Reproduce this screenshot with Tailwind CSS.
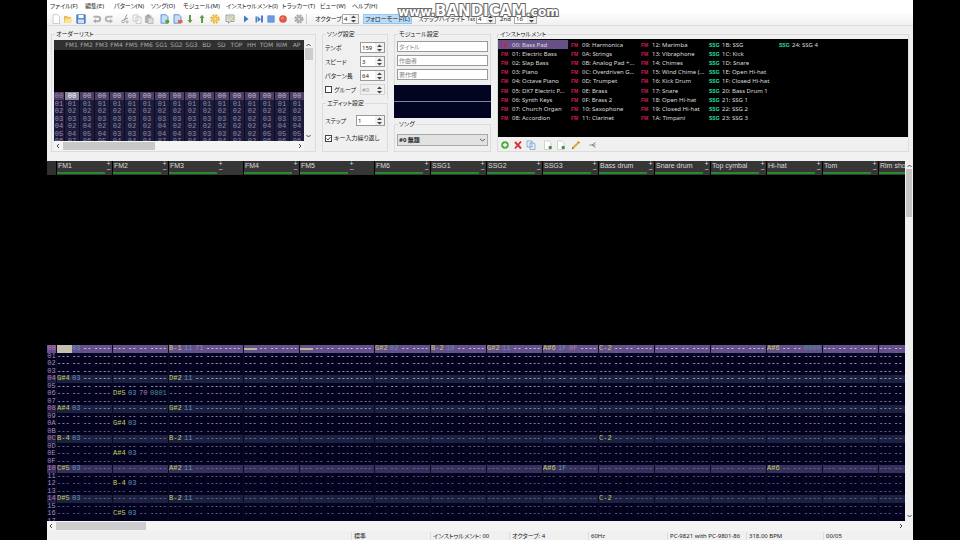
<!DOCTYPE html>
<html lang="ja">
<head>
<meta charset="utf-8">
<title>BambooTracker</title>
<script src="https://cdn.jsdelivr.net/npm/@tailwindcss/browser@4"></script>
</head>
<body class="bg-black font-['Noto_Sans','Noto_Sans_CJK_JP',sans-serif] text-[7px] leading-[8px] text-[#222] [font-feature-settings:'palt']">
<div class="relative mx-[47px] flex h-screen flex-col overflow-hidden bg-[#f0f0f0]">

  <nav class="grid h-3 shrink-0 grid-cols-[35px_29px_37px_32px_43px_56px_38px_32px_auto] items-center bg-white pl-[3px] text-[6px] whitespace-nowrap">
    <a href="#">ファイル(F)</a><a href="#">編集(E)</a><a href="#">パターン(N)</a><a href="#">ソング(O)</a><a href="#">モジュール(M)</a><a href="#">インストゥルメント(I)</a><a href="#">トラッカー(T)</a><a href="#">ビュー(W)</a><a href="#">ヘルプ(H)</a>
  </nav>

  <div class="flex h-[14px] shrink-0 items-center border-b border-[#dcdcdc] bg-gradient-to-b from-white to-[#f0f0f0] pl-1 whitespace-nowrap">
    <div class="flex w-[256px] items-center justify-between border-r border-[#d0d0d0] pr-[2px]">
      <button aria-label="新規"><svg width="10" height="10" viewBox="0 0 10 10"><path d="M2 .7h4.5l2 2v6.8H2z" fill="#fff" stroke="#bbb" stroke-width=".7"/></svg></button>
      <button aria-label="開く"><svg width="10" height="10" viewBox="0 0 10 10"><path d="M1 2h3l1 1h3v6H1z" fill="#e8bc60"/><path d="M2.500 4.500h7L8 9H1z" fill="#fbe48c"/></svg></button>
      <button aria-label="保存"><svg width="10" height="10" viewBox="0 0 10 10"><path d="M.8.8h8.400v8.400H.8z" fill="#5a8fdc" stroke="#2c5fa8" stroke-width=".7"/><path d="M2.500 1h5v3h-5z" fill="#fff"/><path d="M2 5.500h6V9H2z" fill="#cfe2fa"/></svg></button>
      <i class="w-px"></i>
      <button aria-label="元に戻す"><svg width="10" height="10" viewBox="0 0 10 10"><path d="M1.500 2.800H6a2.200 2.200 0 0 1 0 4.400H3" fill="none" stroke="#b0b0b0" stroke-width="2"/><path d="M4 4.800v4.500L1 7.200z" fill="#a8a8a8"/></svg></button>
      <button aria-label="やり直し"><svg width="10" height="10" viewBox="0 0 10 10"><path d="M8.500 2.800H4a2.200 2.200 0 0 0 0 4.400h3" fill="none" stroke="#b8b8b8" stroke-width="2"/><path d="M6 4.800v4.500l3-2.100z" fill="#b0b0b0"/></svg></button>
      <i class="w-px"></i>
      <button aria-label="切り取り"><svg width="10" height="10" viewBox="0 0 10 10"><path d="M7 .5 4 6.500M8 4 3.500 6" stroke="#999" fill="none"/><circle cx="3" cy="7.500" r="1.300" fill="none" stroke="#aaa"/><circle cx="7" cy="7.800" r="1.100" fill="none" stroke="#aaa"/></svg></button>
      <button aria-label="コピー"><svg width="10" height="10" viewBox="0 0 10 10"><path d="M1 1h5v6H1zM4 3h5v6.500H4z" fill="#f6f6f6" stroke="#bbb" stroke-width=".7"/></svg></button>
      <button aria-label="貼り付け"><svg width="10" height="10" viewBox="0 0 10 10"><path d="M1 1.500h6.500V9H1z" fill="#b4b4b4"/><path d="M3 .5h2.500v2H3z" fill="#999"/><path d="M4 4h5v5.500H4z" fill="#ddd" stroke="#aaa" stroke-width=".7"/></svg></button>
      <i class="w-px"></i>
      <button aria-label="上に追加"><svg width="10" height="10" viewBox="0 0 10 10"><path d="M1 .7h5l2 2v6.500H1z" fill="#c4dcf8" stroke="#4c82c8" stroke-width=".8"/><circle cx="7.300" cy="7.500" r="2" fill="#4ea63f"/></svg></button>
      <button aria-label="削除"><svg width="10" height="10" viewBox="0 0 10 10"><path d="M1 .7h5l2 2v6.500H1z" fill="#c4dcf8" stroke="#4c82c8" stroke-width=".8"/><path d="M5 6h4.500v3H5z" fill="#e4673e"/></svg></button>
      <button aria-label="下へ"><svg width="10" height="10" viewBox="0 0 10 10"><path d="M4 1h2v5h1.500L5 9.300 2.500 6H4z" fill="#5d9c4c"/></svg></button>
      <button aria-label="上へ"><svg width="10" height="10" viewBox="0 0 10 10"><path d="M4 9h2V4h1.500L5 .7 2.500 4H4z" fill="#5d9c4c"/></svg></button>
      <button aria-label="モジュール設定"><svg width="10" height="10" viewBox="0 0 10 10"><circle cx="5" cy="5" r="3.700" fill="none" stroke="#eab23e" stroke-width="2" stroke-dasharray="1.900 1"/><circle cx="5" cy="5" r="3" fill="#f5c14e"/><circle cx="5" cy="5" r=".8" fill="#fff"/></svg></button>
      <i class="w-px"></i>
      <button aria-label="コメント"><svg width="10" height="10" viewBox="0 0 10 10"><path d="M1 1h8v6.500H5L3.500 9.300V7.500H1z" fill="#f0ecc8" stroke="#7a92a8" stroke-width=".8"/><path d="M2.500 3h5M2.500 5h3" stroke="#8ba0b4" stroke-width=".7"/><path d="m5 7.500 4-4" stroke="#d4aa4a"/></svg></button>
      <i class="w-px"></i>
      <button aria-label="再生"><svg width="10" height="10" viewBox="0 0 10 10"><path d="M3 1.500 7.500 5 3 8.500z" fill="#3b7ad0"/></svg></button>
      <button aria-label="パターンの先頭から再生"><svg width="10" height="10" viewBox="0 0 10 10"><path d="M1.500 2.500H3v6H1.500zM3.500 2l3.500 3.500L3.500 8zM7 1.500h2v7H7z" fill="#4a80cc"/></svg></button>
      <button aria-label="停止"><svg width="10" height="10" viewBox="0 0 10 10"><path d="M1.700 1.700h6.600v6.600H1.700z" fill="#6a9be0" stroke="#5a8cd4" stroke-width=".6"/></svg></button>
      <button aria-label="ジャムモード"><svg width="10" height="10" viewBox="0 0 10 10"><circle cx="5" cy="5" r="3.800" fill="#e2553f"/><circle cx="4.500" cy="4" r="1.600" fill="#f08070"/></svg></button>
      <i class="w-px"></i>
      <button aria-label="設定"><svg width="10" height="10" viewBox="0 0 10 10"><circle cx="5" cy="5" r="3.800" fill="none" stroke="#a4a4a4" stroke-width="1.600" stroke-dasharray="2 1"/><circle cx="5" cy="5" r="3.200" fill="#b0b0b0"/><circle cx="5" cy="5" r="1" fill="#ddd"/></svg></button>
    </div>
    <label for="oct" class="ml-2 w-[27px] text-[6px]">オクターブ</label>
    <div class="spin flex h-[10px] w-[17px] border border-[#aaa] bg-white text-[6px]"><input id="oct" value="4" class="w-0 grow pl-px"></div>
    <button class="ml-1 h-[10px] w-[49px] border border-[#90c8f6] bg-[#b9dcf8] text-[6px] leading-[8px]">フォローモード(L)</button>
    <label for="h1" class="ml-[6px] w-[58px] text-[6px]">ステップハイライト 1st</label>
    <div class="spin flex h-[10px] w-5 border border-[#aaa] bg-white text-[6px]"><input id="h1" value="4" class="w-0 grow pl-px"></div>
    <label for="h2" class="ml-1 w-[14px] text-[6px]">2nd</label>
    <div class="spin flex h-[10px] w-[23px] border border-[#aaa] bg-white text-[6px]"><input id="h2" value="16" class="w-0 grow pl-px"></div>
  </div>

  <p class="absolute top-[2px] left-[351px] font-['DejaVu_Sans',sans-serif] text-[12px] leading-[18px] font-bold whitespace-nowrap text-white [-webkit-text-stroke:2px_#666] [paint-order:stroke]">www.<span class="text-[15px]">BANDICAM</span>.com</p>

  <main class="flex h-[135px] shrink-0 items-start gap-[6px] px-1 pt-1">
    <fieldset class="h-[122px] w-[265px] min-w-0 border border-[#dcdcdc] px-[2px]">
      <legend class="ml-px px-px text-[6px]">オーダーリスト</legend>
      <div class="mt-[2px] grid grid-cols-[250px_9px] grid-rows-[101px_10px]">
        <div class="overflow-hidden bg-black font-['DejaVu_Sans',sans-serif] text-[#8d8ba0]">
          <table class="block w-full">
            <thead class="block"><tr id="ohead" class="flex h-[10px] items-center bg-[#303030] text-[6px] text-[#aaa]"></tr></thead>
            <tbody id="orders" class="mt-[42px] grid h-[60px] grid-rows-8 font-['Liberation_Mono',monospace] text-[7px]"></tbody>
          </table>
        </div>
        <div class="flex flex-col items-center justify-between bg-[#f0f0f0] py-[2px]">
          <svg width="7" height="6" viewBox="0 0 7 6"><path d="M1.500 4 3.500 2l2 2" fill="none" stroke="#444"/></svg>
          <i class="mb-auto h-[12px] w-[8px] bg-[#cdcdcd]"></i>
          <svg width="7" height="6" viewBox="0 0 7 6"><path d="m1.500 2 2 2 2-2" fill="none" stroke="#444"/></svg>
        </div>
        <div class="flex items-center bg-[#f4f4f4]">
          <svg width="9" height="8" viewBox="0 0 9 8"><path d="M5 2 3 4l2 2" fill="none" stroke="#444"/></svg>
          <i class="mr-auto h-2 w-[92px] bg-[#c8c8c8]"></i>
          <svg width="9" height="8" viewBox="0 0 9 8"><path d="m4 2 2 2-2 2" fill="none" stroke="#444"/></svg>
        </div>
      </div>
    </fieldset>

    <div class="w-[66px]">
      <fieldset class="h-[69px] border border-b-0 border-[#dcdcdc] px-[2px]">
        <legend class="ml-px px-px text-[6px]">ソング設定</legend>
        <div class="mt-1 grid gap-y-[3px] text-[6px]">
          <div class="flex h-[11px] items-center"><label for="tempo" class="grow">テンポ</label><div class="spin flex h-[11px] w-[25px] border border-[#999] bg-white"><input id="tempo" value="159" class="w-0 grow pl-px"></div></div>
          <div class="flex h-[11px] items-center"><label for="speed" class="grow">スピード</label><div class="spin flex h-[11px] w-[25px] border border-[#999] bg-white"><input id="speed" value="3" class="w-0 grow pl-px"></div></div>
          <div class="flex h-[11px] items-center"><label for="plen" class="grow">パターン長</label><div class="spin flex h-[11px] w-[25px] border border-[#999] bg-white"><input id="plen" value="64" class="w-0 grow pl-px"></div></div>
          <div class="flex h-[11px] items-center"><input type="checkbox" id="grv" class="mr-[2px] size-[7px] appearance-none border border-[#444] bg-white"><label for="grv" class="grow">グループ</label><div class="spin flex h-[11px] w-[25px] border border-[#d4d4d4] text-[#999]"><input aria-label="グループ番号" value="#0" class="w-0 grow pl-px" disabled></div></div>
        </div>
      </fieldset>
      <fieldset class="h-[53px] border border-t border-[#dcdcdc] px-[2px]">
        <legend class="ml-px px-px text-[6px]">エディット設定</legend>
        <div class="mt-2 flex h-[11px] items-center text-[6px]"><label for="step" class="grow">ステップ</label><div class="spin flex h-[11px] w-[29px] border border-[#999] bg-white"><input id="step" value="1" class="w-0 grow pl-px"></div></div>
        <div class="mt-2 flex h-[8px] items-center text-[6px] whitespace-nowrap">
          <span class="relative mr-[2px] flex size-[7px] shrink-0"><input type="checkbox" id="keyrep" checked class="size-[7px] appearance-none border border-[#444] bg-white"><svg class="pointer-events-none absolute inset-0" viewBox="0 0 7 7"><path d="m1.500 3.500 1.500 1.500 2.500-3" fill="none" stroke="#333" stroke-width=".9"/></svg></span>
          <label for="keyrep">キー入力繰り返し</label></div>
      </fieldset>
    </div>

    <div class="w-[97px]">
      <fieldset class="h-[55px] border border-b-0 border-[#dcdcdc] px-[2px]">
        <legend class="ml-px px-px text-[6px]">モジュール設定</legend>
        <div class="mt-[3px] grid gap-[3px] text-[6px]">
          <input aria-label="タイトル" placeholder="タイトル" class="h-[11px] w-full border border-[#999] bg-white px-px placeholder:text-[#888]">
          <input aria-label="作曲者" placeholder="作曲者" class="h-[11px] w-full border border-[#999] bg-white px-px placeholder:text-[#888]">
          <input aria-label="著作権" placeholder="著作権" class="h-[11px] w-full border border-[#999] bg-white px-px placeholder:text-[#888]">
        </div>
      </fieldset>
      <div class="flex h-[33px] items-center bg-[#030322]"><i class="h-px w-full bg-[#7088a8]"></i></div>
      <fieldset class="mt-[2px] h-[32px] border border-[#dcdcdc] px-[2px]">
        <legend class="ml-px px-px text-[6px]">ソング</legend>
        <div class="relative mt-[6px] h-[12px]">
          <select aria-label="ソング" class="h-[12px] w-full appearance-none border border-[#aaa] bg-[#e2e2e2] px-px text-[6px] font-bold"><option>#0 無題</option></select>
          <svg class="pointer-events-none absolute top-[3px] right-[2px]" width="7" height="6" viewBox="0 0 7 6"><path d="m1 2 2.500 2L6 2" fill="none" stroke="#444" stroke-width=".8"/></svg>
        </div>
      </fieldset>
    </div>

    <fieldset class="h-[122px] min-w-0 grow border border-[#dcdcdc]">
      <legend class="ml-px px-px text-[6px]">インストゥルメント</legend>
      <ul id="inst" class="mt-px grid h-[98px] grid-flow-col grid-cols-[repeat(5,70px)] grid-rows-[repeat(9,1fr)] overflow-hidden bg-black pt-px pb-[14px] text-[6px] text-[#dcdcdc]"></ul>
      <div class="flex items-center gap-[3px] pt-[3px] pl-[2px]">
        <button aria-label="追加"><svg width="10" height="10" viewBox="0 0 10 10"><circle cx="5" cy="5" r="3.800" fill="#4fae3f"/><path d="M5 3v4M3 5h4" stroke="#fff" stroke-width="1.300"/></svg></button>
        <button aria-label="削除"><svg width="10" height="10" viewBox="0 0 10 10"><path d="m2 2 6 6.500M8 1.500 2 8.500" stroke="#dc3030" stroke-width="1.900"/></svg></button>
        <button aria-label="複製"><svg width="10" height="10" viewBox="0 0 10 10"><path d="M1 1h5v6H1zM4 3h4l1 1v5.500H4z" fill="#e4eefb" stroke="#6e96cc" stroke-width=".7"/></svg></button>
        <i class="w-px"></i>
        <button aria-label="読み込み"><svg width="10" height="10" viewBox="0 0 10 10"><path d="M1.500 1h4.500l2 2v6.500H1.500z" fill="#fff" stroke="#bbb" stroke-width=".6"/><circle cx="7.200" cy="7.500" r="1.700" fill="#4d8a4c"/></svg></button>
        <button aria-label="書き出し"><svg width="10" height="10" viewBox="0 0 10 10"><path d="M1.500 1h4.500l2 2v6.500H1.500z" fill="#fff" stroke="#bbb" stroke-width=".6"/><circle cx="7.200" cy="7.500" r="1.700" fill="#4d8a4c"/></svg></button>
        <button aria-label="編集" class="ml-[2px]"><svg width="10" height="10" viewBox="0 0 10 10"><path d="m2 8 6-6" stroke="#e0ac3c" stroke-width="2.200"/><path d="m7 1.500 1.500 1.500" stroke="#c08030" stroke-width="1.200"/><path d="m.8 9.200.6-2.200L3 8.600z" fill="#665"/></svg></button>
        <button aria-label="名前の変更" class="ml-1"><svg width="10" height="10" viewBox="0 0 10 10"><path d="M1.500 5h6M4 5l3.500-2.500M4 5l3.500 2.500" stroke="#888" fill="none"/></svg></button>
      </div>
    </fieldset>
  </main>

  <div class="flex min-h-0 grow">
    <div class="flex min-w-0 grow flex-col overflow-hidden bg-black">
      <div id="tracks" class="flex h-[14px] w-max shrink-0 bg-[#1c1c1c] font-['Liberation_Sans',sans-serif] text-[7px] text-[#dcdcdc]"></div>
      <div class="mt-[170px] min-h-0 grow overflow-hidden bg-[#02021f]">
        <table class="block w-max font-['Liberation_Mono',monospace] text-[7px]"><tbody id="pattern" class="grid h-[180px] grid-rows-[repeat(24,1fr)]"></tbody></table>
      </div>
    </div>
    <div class="flex w-2 shrink-0 flex-col items-center justify-between bg-[#f0f0f0] py-[2px]">
      <svg width="7" height="6" viewBox="0 0 7 6"><path d="M1.500 4 3.500 2l2 2" fill="none" stroke="#444"/></svg>
      <i class="mb-auto h-[48px] w-[6px] bg-[#c4c4c4]"></i>
      <svg width="7" height="6" viewBox="0 0 7 6"><path d="m1.500 2 2 2 2-2" fill="none" stroke="#444"/></svg>
    </div>
  </div>
  <div class="flex h-[10px] shrink-0 items-center bg-[#f4f4f4] pr-2">
    <svg width="9" height="8" viewBox="0 0 9 8"><path d="M5 2 3 4l2 2" fill="none" stroke="#444"/></svg>
    <i class="mr-auto h-2 w-[90px] bg-[#cdcdcd]"></i>
    <svg width="9" height="8" viewBox="0 0 9 8"><path d="m4 2 2 2-2 2" fill="none" stroke="#444"/></svg>
  </div>
  <footer id="status" class="grid h-[9px] shrink-0 grid-cols-[304px_79px_79px_79px_79px_79px_77px_1fr] items-end overflow-hidden text-[6px] whitespace-nowrap"><span></span></footer>
</div>

<script>
const el = (tag, cls, text) => { const e = document.createElement(tag); e.className = cls; if (text !== undefined) e.textContent = text; return e; };

document.querySelectorAll('.spin').forEach(s => {
  const b = el('button', 'flex w-[9px] shrink-0 items-center justify-center bg-[#f0f0f0]');
  b.setAttribute('aria-label', '増減');
  b.innerHTML = '<svg width="5" height="8" viewBox="0 0 5 8"><path d="M0 3 2.500 .5 5 3zM0 5l2.500 2.500L5 5z" fill="#444"/></svg>';
  s.append(b);
});

const oh = document.getElementById('ohead');
oh.append(el('th', 'w-[10px]', ''));
'FM1 FM2 FM3 FM4 FM5 FM6 SG1 SG2 SG3 BD SD TOP HH TOM RIM AP'.split(' ').forEach(t => oh.append(el('th', 'flex w-[15px] justify-center font-normal', t)));
const orders = [
  '00 00 00 00 00 00 00 00 00 00 00 00 00 00 00 00', '01 01 01 01 01 01 01 01 01 01 01 01 01 01 01 01',
  '02 02 02 02 02 02 02 02 02 02 02 02 02 02 02 02', '03 03 03 03 03 03 03 03 03 03 03 02 02 03 03 03',
  '02 04 02 02 02 02 04 02 02 02 02 02 02 04 04 04', '04 05 04 03 03 03 04 04 03 03 03 02 02 05 05 05',
  '07 06 05 04 04 04 07 07 04 04 04 02 02 06 06 06'];
orders.forEach((r, i) => {
  const tr = el('tr', i ? 'flex min-h-0 items-center bg-[#1c1b3c]' : 'flex min-h-0 items-center bg-[#4c3f66] text-[#c0bccc]');
  tr.append(el('th', 'h-full w-[10px] leading-[8px] font-normal text-[#a08aa8]', '0' + i));
  r.split(' ').forEach((v, j) => tr.append(el('td', !i && !j ? 'h-full w-[15px] border-l border-[#0c0c20] bg-[#8c86a0] text-center leading-[8px] text-white' : 'h-full w-[15px] border-l border-[#0c0c20] text-center leading-[8px]', v)));
  document.getElementById('orders').append(tr);
});

const names = ['00: Bass Pad','01: Electric Bass','02: Slap Bass','03: Piano','04: Octave Piano','05: DX7 Electric P...','06: Synth Keys','07: Church Organ','08: Accordion','09: Harmonica','0A: Strings','0B: Analog Pad +...','0C: Overdriven G...','0D: Trumpet','0E: Brass','0F: Brass 2','10: Saxophone','11: Clarinet','12: Marimba','13: Vibraphone','14: Chimes','15: Wind Chime (...','16: Kick Drum','17: Snare','18: Open Hi-hat','19: Closed Hi-hat','1A: Timpani','1B: SSG','1C: Kick','1D: Snare','1E: Open Hi-hat','1F: Closed Hi-hat','20: Bass Drum 1','21: SSG 1','22: SSG 2','23: SSG 3','24: SSG 4'];
names.forEach((n, i) => {
  const li = el('li', i ? 'flex min-h-0 items-center whitespace-nowrap' : 'flex min-h-0 items-center bg-[#675088] whitespace-nowrap');
  li.append(el('b', i < 27 ? "w-[14px] shrink-0 pl-[3px] font-['Liberation_Sans',sans-serif] text-[5px] text-[#d01c50]" : "w-[14px] shrink-0 pl-px font-['Liberation_Sans',sans-serif] text-[5px] text-[#28e0a8]", i < 27 ? 'FM' : 'SSG'), el('span', '', n));
  document.getElementById('inst').append(li);
});

const tracks = ['FM1','FM2','FM3','FM4','FM5','FM6','SSG1','SSG2','SSG3','Bass drum','Snare drum','Top cymbal','Hi-hat','Tom','Rim shot'];
const T = document.getElementById('tracks');
T.append(el('i', 'w-[9px] bg-[#303030]'));
tracks.forEach((n, i) => {
  const wide = i === 2 || i === 4;
  const d = el('div', wide ? 'flex w-[75px] border-l border-black bg-[#363636]' : 'flex w-14 border-l border-black bg-[#363636]');
  const name = el('div', 'flex w-[48px] shrink-0 flex-col justify-between pb-px');
  name.append(el('span', 'pl-px leading-[10px] whitespace-nowrap', n), el('i', 'block h-[2px] bg-[#268a2a]'));
  const pm = el('div', 'w-[7px] text-center text-[7px] leading-[6px]');
  pm.append(el('div', '', '+'), el('div', '', '−'));
  d.append(name, pm);
  T.append(d);
});

const data = {
  '0,0': ['', '03'], '0,2': ['B-1', '11', '71'], '0,3': ['=', ''], '0,4': ['=', ''], '0,5': ['G#2', '02'], '0,6': ['B-2', '10'], '0,7': ['G#2', '11'], '0,8': ['A#6', '1F', '0F'], '0,9': ['C-2'], '0,12': ['A#6', '', '', '0000'],
  '4,0': ['G#4', '03'], '4,2': ['D#2', '11'], '6,1': ['D#5', '03', '70', '0801'], '8,0': ['A#4', '03'], '8,2': ['G#2', '11'], '10,1': ['G#4', '03'],
  '12,0': ['B-4', '03'], '12,2': ['B-2', '11'], '12,9': ['C-2'], '14,1': ['A#4', '03'], '16,0': ['C#5', '03'], '16,2': ['A#2', '11'], '16,8': ['A#6', '1F'], '16,12': ['A#6'],
  '18,1': ['B-4', '03'], '20,0': ['D#5', '03'], '20,2': ['B-2', '11'], '20,9': ['C-2'], '22,1': ['C#5', '03']};
const P = document.getElementById('pattern');
for (let r = 0; r < 24; r++) {
  const bg = r === 0 ? 'bg-[#64508a]' : r === 16 ? 'bg-[#35305c]' : r % 4 === 0 ? 'bg-[#1c2142]' : 'bg-[#02021f]';
  const dash = r === 0 ? 'text-white' : r < 6 ? 'text-[#e4e4f4]' : r < 11 ? 'text-[#c0c0d8]' : r < 16 ? 'text-[#a0a0bc]' : 'text-[#8c8cac]';
  const tr = el('tr', 'flex min-h-0 items-center leading-[7px] ' + bg + ' ' + dash);
  tr.append(el('th', r % 4 ? 'w-[9px] font-normal text-[#a890b4]' : 'w-[9px] font-normal text-[#c070b0]', r.toString(16).toUpperCase().padStart(2, '0')));
  for (let c = 0; c < 15; c++) {
    const d = data[r + ',' + c] || [];
    const td = el('td', 'flex h-full items-center border-l border-[#0a0a20]');
    if (r === 0 && c === 0) td.append(el('span', 'h-full w-[15px] bg-[#c4c0b0]', ''));
    else if (d[0] === '=') { const s = el('span', 'flex w-[15px] items-center'); s.append(el('i', 'h-[2px] w-[13px] bg-[#b8b890]')); td.append(s); }
    else td.append(el('span', d[0] ? 'w-[15px] text-[#c4cc64]' : 'w-[15px]', d[0] || '---'));
    td.append(el('span', d[1] ? 'w-[11px] text-[#6494b8]' : 'w-[11px]', d[1] || '--'));
    td.append(el('span', d[2] ? 'w-[11px] text-[#b080a0]' : 'w-[11px]', d[2] || '--'));
    td.append(el('span', d[3] ? 'w-[18px] text-[#4c9090]' : 'w-[18px]', d[3] || '----'));
    if (c === 2 || c === 4) td.append(el('span', 'w-[19px]', '----'));
    tr.append(td);
  }
  P.append(tr);
}

['標準', 'インストゥルメント: 00', 'オクターブ: 4', '60Hz', 'PC-9821 with PC-9801-86', '318.00 BPM', '00/05'].forEach(t => document.getElementById('status').append(el('span', 'border-l border-[#ddd] pl-[2px]', t)));
</script>
</body>
</html>
